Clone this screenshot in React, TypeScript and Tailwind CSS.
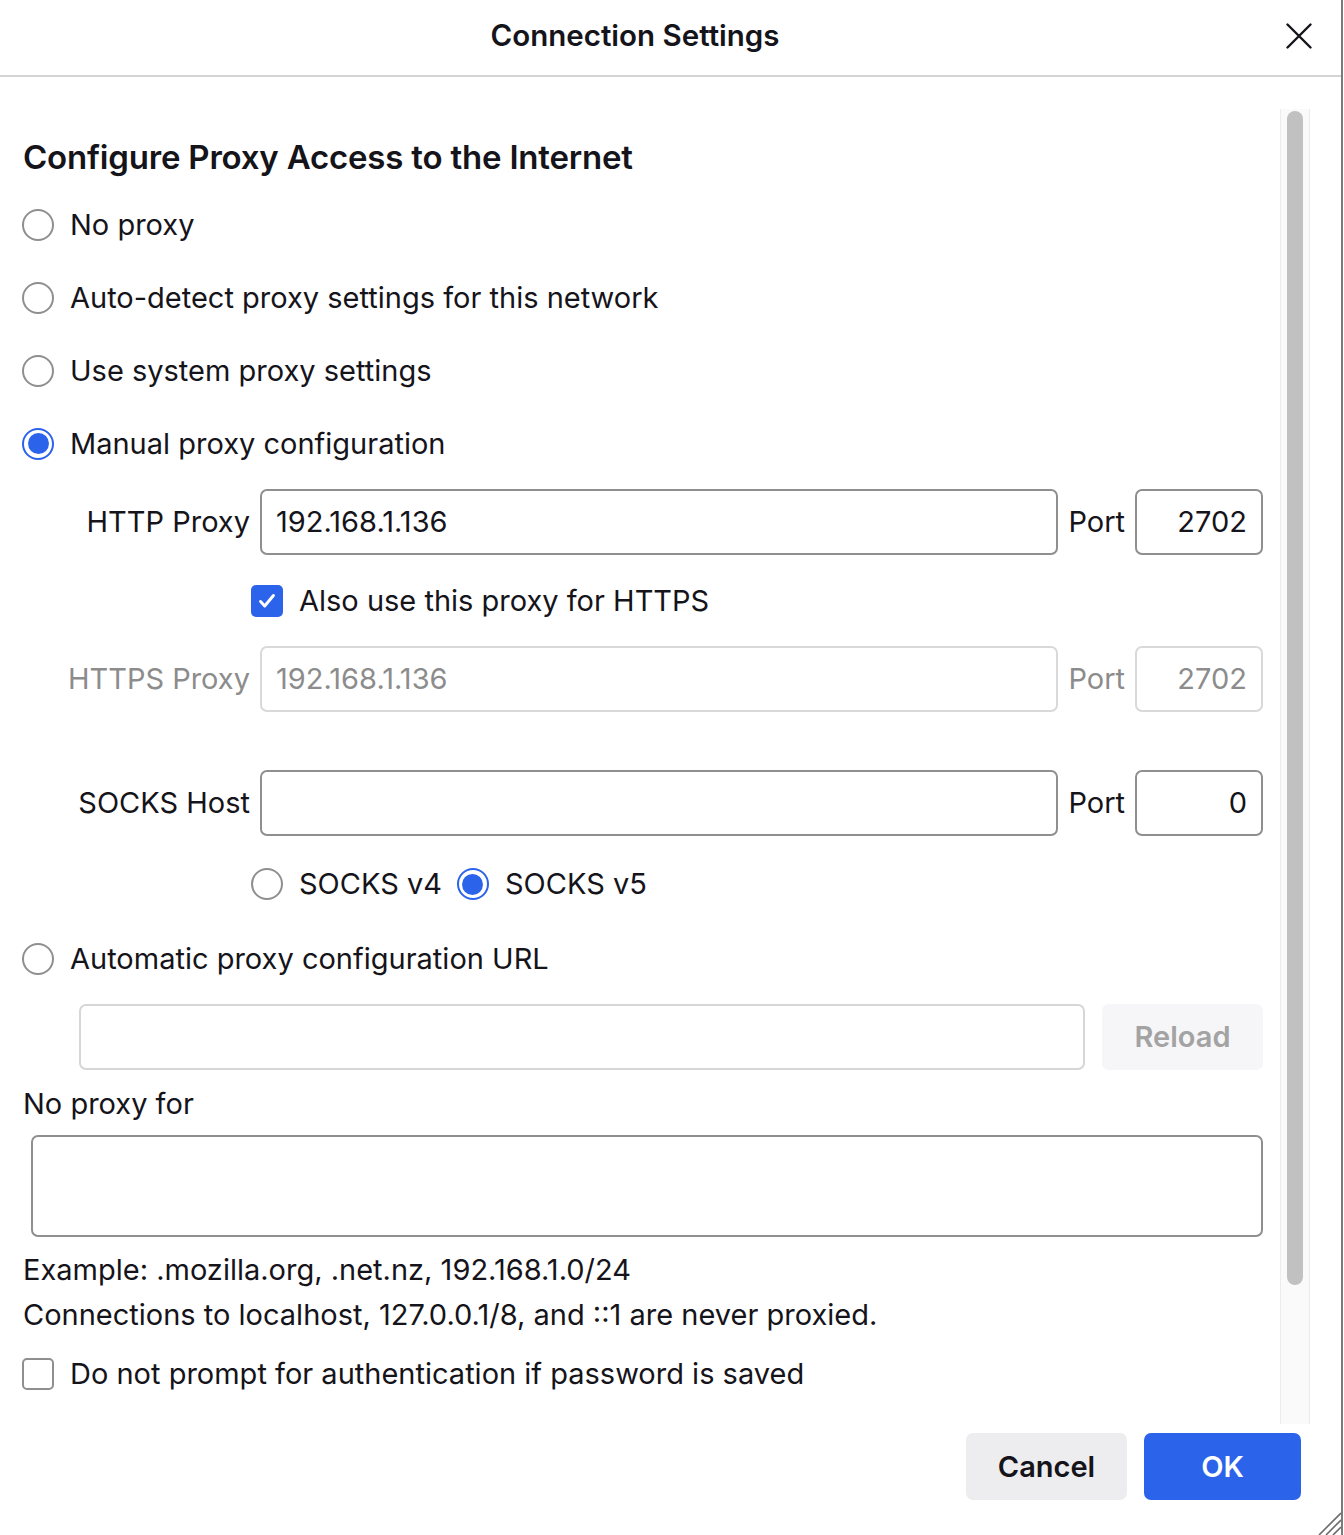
import React from "react";

const font = "font-['Inter','Liberation_Sans',sans-serif]";

function Radio({ checked }: { checked?: boolean }) {
    if (checked) {
        return (
            <span className="flex items-center justify-center w-[32px] h-[32px] shrink-0 rounded-full border-2 border-[#2b63eb] bg-white">
                <span className="w-[21px] h-[21px] rounded-full bg-[#2b63eb]"></span>
            </span>
        );
    }
    return <span className="w-[32px] h-[32px] shrink-0 rounded-full border-2 border-[#8f8f8f] bg-white"></span>;
}

function Checkbox({ checked }: { checked?: boolean }) {
    if (checked) {
        return (
            <span className="flex items-center justify-center w-[32px] h-[32px] shrink-0 rounded-[5px] bg-[#2b63eb]">
                <svg className="w-[22px] h-[22px]" viewBox="0 0 24 24" fill="none" stroke="white" strokeWidth={3.2} strokeLinecap="round" strokeLinejoin="round">
                    <path d="M5 12.5l4.5 5L19 6" />
                </svg>
            </span>
        );
    }
    return <span className="w-[32px] h-[32px] shrink-0 rounded-[5px] border-2 border-[#8f8f8f] bg-white"></span>;
}

function RadioRow({ label, checked }: { label: string; checked?: boolean }) {
    return (
        <div className="flex items-center h-[73px] gap-[16px]">
            <Radio checked={checked} />
            <span>{label}</span>
        </div>
    );
}

function ProxyRow({ label, host, port, disabled }: { label: string; host: string; port: string; disabled?: boolean }) {
    const border = disabled ? "border-[#d9d9d9]" : "border-[#8f8f8f]";
    const text = disabled ? "text-[#8c8c8c]" : "text-[#15141a]";
    return (
        <div className={`grid grid-cols-[228px_1fr_auto_128px] gap-[10px] items-center h-[66px] ${text}`}>
            <span className="text-right">{label}</span>
            <div className={`h-[66px] flex items-center px-[14px] rounded-[7px] border-2 ${border}`}>{host}</div>
            <span>Port</span>
            <div className={`h-[66px] flex items-center justify-end px-[14px] rounded-[7px] border-2 ${border}`}>{port}</div>
        </div>
    );
}

export default function App() {
    return (
        <div className={`relative flex flex-col w-[1343px] h-[1535px] bg-white border-r-2 border-[#7b7b7b] text-[29px] text-[#15141a] ${font}`}>
            {/* header */}
            <div className="flex items-center h-[77px] border-b-2 border-[#d4d4d4] shrink-0">
                <span className="flex-1 text-center font-semibold text-[29.5px] -mt-[4px]">Connection Settings</span>
                <div className="flex justify-end w-[71px] pr-[29px] -mt-[4px]">
                    <svg className="w-[26px] h-[26px]" viewBox="0 0 26 26" fill="none" stroke="#15141a" strokeWidth={2.4} strokeLinecap="round">
                        <path d="M1.5 1.5l23 23M24.5 1.5l-23 23" />
                    </svg>
                </div>
            </div>

            {/* body */}
            <div className="flex h-[1347px] shrink-0">
                <div className="flex flex-col w-[1263px] pl-[22px] pt-[57px]">
                    <div className="flex items-center h-[48px] pl-[1px]">
                        <h1 className="font-semibold text-[33px] tracking-[-0.2px]">Configure Proxy Access to the Internet</h1>
                    </div>
                    <div className="mt-[6px]">
                        <RadioRow label="No proxy" />
                        <RadioRow label="Auto-detect proxy settings for this network" />
                        <RadioRow label="Use system proxy settings" />
                        <RadioRow label="Manual proxy configuration" checked />
                    </div>

                    <div className="mt-[9px]">
                        <ProxyRow label="HTTP Proxy" host="192.168.1.136" port="2702" />
                    </div>
                    <div className="flex items-center h-[91px] pl-[229px] gap-[16px]">
                        <Checkbox checked />
                        <span>Also use this proxy for HTTPS</span>
                    </div>
                    <ProxyRow label="HTTPS Proxy" host="192.168.1.136" port="2702" disabled />

                    <div className="mt-[58px]">
                        <ProxyRow label="SOCKS Host" host="" port="0" />
                    </div>
                    <div className="flex items-center h-[68px] mt-[14px] pl-[229px]">
                        <Radio />
                        <span className="ml-[16px]">SOCKS v4</span>
                        <span className="ml-[15px]"><Radio checked /></span>
                        <span className="ml-[16px]">SOCKS v5</span>
                    </div>
                    <div className="flex items-center h-[68px] mt-[7px] gap-[16px]">
                        <Radio />
                        <span>Automatic proxy configuration URL</span>
                    </div>
                    <div className="flex items-center gap-[17px] h-[66px] mt-[11px] pl-[57px]">
                        <div className="flex-1 h-[66px] rounded-[7px] border-2 border-[#d6d6d6]"></div>
                        <div className="w-[161px] h-[66px] flex items-center justify-center rounded-[7px] bg-[#f6f6f8] text-[#a3a3a3] font-semibold">
                            Reload
                        </div>
                    </div>

                    <div className="flex items-center h-[48px] mt-[10px] pl-[1px]">No proxy for</div>
                    <div className="h-[102px] mt-[7px] ml-[9px] rounded-[7px] border-2 border-[#8f8f8f]"></div>
                    <div className="flex items-center h-[45px] mt-[10px] pl-[1px]">Example: .mozilla.org, .net.nz, 192.168.1.0/24</div>
                    <div className="flex items-center h-[45px] pl-[1px]">Connections to localhost, 127.0.0.1/8, and ::1 are never proxied.</div>
                    <div className="flex items-center h-[60px] mt-[7px] gap-[16px]">
                        <Checkbox />
                        <span>Do not prompt for authentication if password is saved</span>
                    </div>
                </div>

                {/* scrollbar */}
                <div className="ml-[17px] mt-[32px] w-[30px] h-[1315px] flex justify-center bg-[#fafafa] border-x border-[#ececec]">
                    <div className="mt-[2px] w-[16px] h-[1174px] rounded-full bg-[#c1c1c1]"></div>
                </div>
            </div>

            {/* footer */}
            <div className="flex justify-end gap-[17px] pt-[9px] pr-[40px]">
                <button className="w-[161px] h-[67px] rounded-[7px] bg-[#ededf0] font-semibold text-[29px] text-[#15141a]">Cancel</button>
                <button className="w-[157px] h-[67px] rounded-[7px] bg-[#2b63eb] font-semibold text-[29px] text-white">OK</button>
            </div>

            {/* resize grip */}
            <svg className="absolute right-0 bottom-0 w-[24px] h-[24px]" viewBox="0 0 24 24" stroke="#6b6b6b" strokeWidth={1.6}>
                <path d="M24 2L2 24M24 9L9 24M24 16L16 24" />
            </svg>
        </div>
    );
}
